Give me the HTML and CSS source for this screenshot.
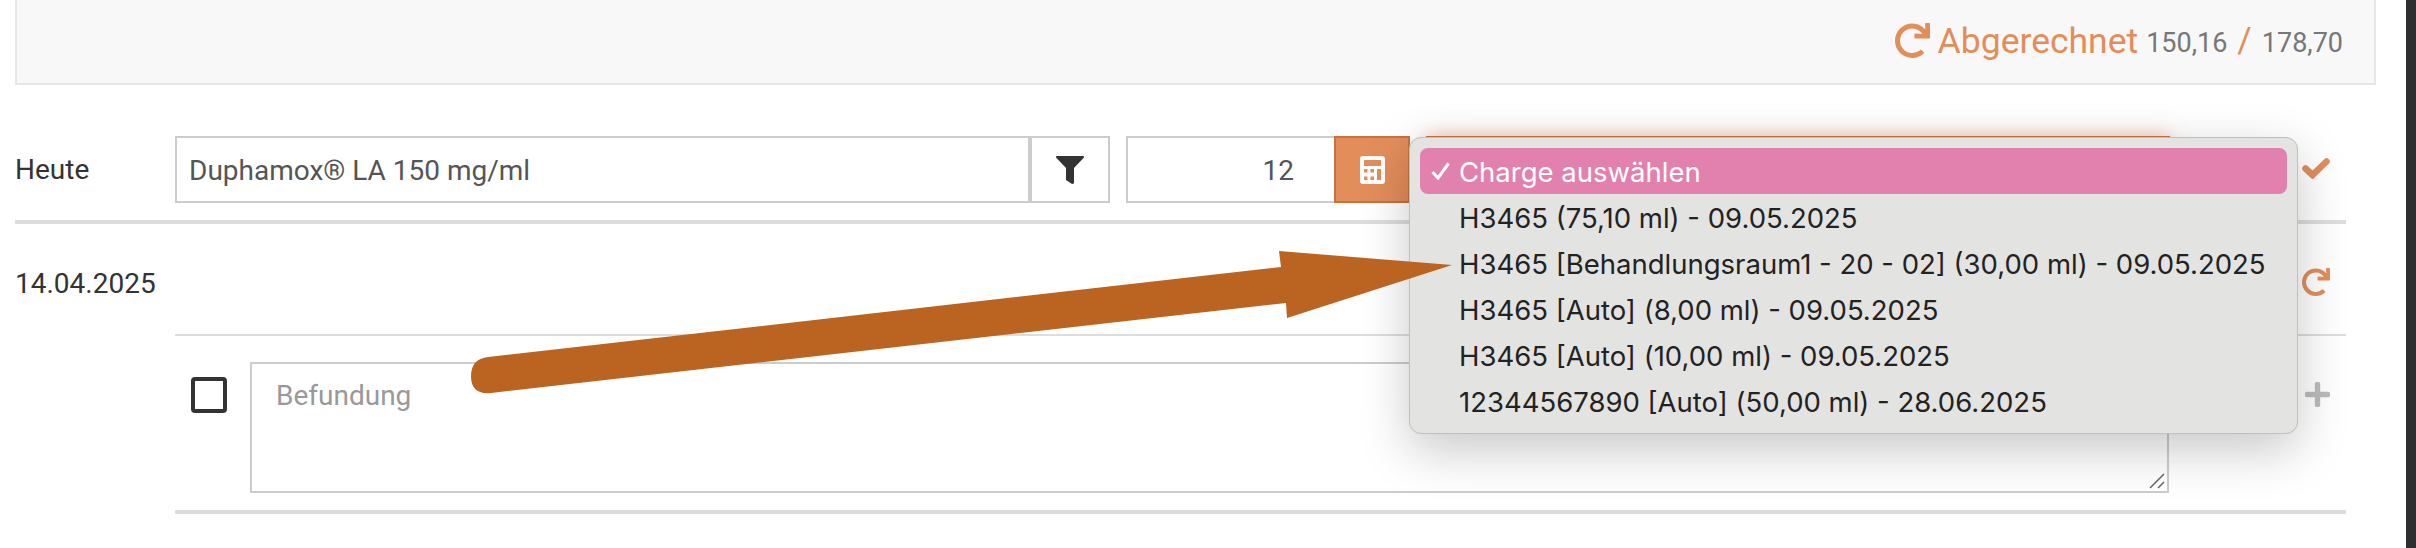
FILE: index.html
```html
<!DOCTYPE html>
<html lang="de">
<head>
<meta charset="utf-8">
<title>Behandlung</title>
<link rel="stylesheet" href="styles.css">
</head>
<body>
<div class="page">
  <main class="main">
    <header class="panel">
      <svg class="icon panel-icon" viewBox="8 0 504 504"><path d="M500.33 0h-47.41a12 12 0 0 0-12 12.57l4 82.76A247.42 247.42 0 0 0 256 8C119.34 8 7.9 119.53 8 256.19 8.1 393.07 119.1 504 256 504a247.1 247.1 0 0 0 166.18-63.91 12 12 0 0 0 .48-17.43l-34-34a12 12 0 0 0-16.38-.55A176 176 0 1 1 402.1 157.8l-101.53-4.87a12 12 0 0 0-12.57 12v47.41a12 12 0 0 0 12 12h200.33a12 12 0 0 0 12-12V12a12 12 0 0 0-12-12z"/></svg>
      <span class="panel-title">Abgerechnet</span>
      <span class="panel-num">150,16</span>
      <span class="panel-slash">/</span>
      <span class="panel-num">178,70</span>
    </header>

    <section class="row row-today">
      <div class="label">Heute</div>
      <div class="group group-product">
        <div class="field field-product">Duphamox® LA 150 mg/ml</div>
        <div class="addon addon-filter">
          <svg class="icon filter-icon" viewBox="0 0 28 28"><path d="M1 0H27Q28.500 0 28 1.500L18 12V26.500Q18 28 16 28L10 24V12L0 1.500Q-.5 0 1 0Z"/></svg>
        </div>
      </div>
      <div class="group group-qty">
        <div class="field field-qty">12</div>
        <div class="addon addon-calc">
          <svg class="calc-icon" viewBox="0 0 25 28"><path fill-rule="evenodd" d="M3 0h19a3 3 0 0 1 3 3v22a3 3 0 0 1-3 3H3a3 3 0 0 1-3-3V3a3 3 0 0 1 3-3zM4 4v6h17V4zM4 13v3.500h3.500V13zM10.500 13v3.500H14V13zM17 13v11h4V13zM4 20.500V24h3.500v-3.500zM10.500 20.500V24H14v-3.500z"/></svg>
        </div>
      </div>
      <div class="select-box"></div>
      <svg class="action action-check" viewBox="0 0 28 21"><path d="M3.500 10.500l7 6.500L24.500 3.500"/></svg>
    </section>

    <section class="row row-history">
      <div class="label">14.04.2025</div>
      <svg class="icon action-redo" viewBox="8 0 504 504"><path d="M500.33 0h-47.41a12 12 0 0 0-12 12.57l4 82.76A247.42 247.42 0 0 0 256 8C119.34 8 7.9 119.53 8 256.19 8.1 393.07 119.1 504 256 504a247.1 247.1 0 0 0 166.18-63.91 12 12 0 0 0 .48-17.43l-34-34a12 12 0 0 0-16.38-.55A176 176 0 1 1 402.1 157.8l-101.53-4.87a12 12 0 0 0-12.57 12v47.41a12 12 0 0 0 12 12h200.33a12 12 0 0 0 12-12V12a12 12 0 0 0-12-12z"/></svg>
    </section>

    <section class="row row-finding">
      <div class="checkbox"></div>
      <div class="textarea">
        Befundung
        <svg class="resizer" viewBox="0 0 16 16"><path d="M1 15L15 1M9 15l6-6"/></svg>
      </div>
      <svg class="icon action-plus" viewBox="0 32 448 448"><path d="M416 208H272V64c0-17.67-14.33-32-32-32h-32c-17.67 0-32 14.33-32 32v144H32c-17.67 0-32 14.33-32 32v32c0 17.67 14.33 32 32 32h144v144c0 17.67 14.33 32 32 32h32c17.67 0 32-14.33 32-32V304h144c17.67 0 32-14.33 32-32v-32c0-17.67-14.33-32-32-32z"/></svg>
    </section>
  </main>
  <div class="edge"></div>
</div>

<div class="menu">
  <div class="menu-item menu-item-active"><svg class="menu-tick" viewBox="0 0 19 18"><path d="M1.500 10l5.500 6L17.500 1.500"/></svg>Charge auswählen</div>
  <div class="menu-item">H3465 (75,10 ml) - 09.05.2025</div>
  <div class="menu-item">H3465 [Behandlungsraum1 - 20 - 02] (30,00 ml) - 09.05.2025</div>
  <div class="menu-item">H3465 [Auto] (8,00 ml) - 09.05.2025</div>
  <div class="menu-item">H3465 [Auto] (10,00 ml) - 09.05.2025</div>
  <div class="menu-item">12344567890 [Auto] (50,00 ml) - 28.06.2025</div>
</div>

<svg class="arrow" viewBox="0 0 2416 548">
  <path d="M488 357L1281 267L1279 251L1452 265L1287 318L1286 303L491 393Q471 395 471 376Q471 359 488 357Z"/>
</svg>
</body>
</html>
```

FILE: styles.css
```css
* {
  box-sizing: border-box;
}

html,
body {
  margin: 0;
  padding: 0;
  background: #fff;
}

body {
  position: relative;
  width: 2416px;
  height: 548px;
  overflow: hidden;
  font-family: Roboto, "Liberation Sans", sans-serif;
  font-size: 28px;
  color: #333;
}

.page {
  display: flex;
  height: 548px;
}

.main {
  flex: 1;
  padding-left: 15px;
  min-width: 0;
}

.edge {
  width: 10px;
  background: #2d2e30;
}

.icon {
  display: block;
  fill: currentColor;
}

/* Header panel */
.panel {
  display: flex;
  align-items: center;
  justify-content: flex-end;
  width: 2361px;
  height: 85px;
  padding: 0 31px 2px 0;
  background: #f8f8f8;
  border: 2px solid #e7e7e7;
  border-top: 0;
}

.panel-icon {
  width: 35px;
  height: 35px;
  margin-right: 8px;
  color: #e38d5b;
}

.panel-title {
  font-size: 35.500px;
  color: #e38d5b;
  margin-right: 8px;
}

.panel-num {
  font-size: 27px;
  color: #777;
  padding-top: 5px;
}

.panel-slash {
  font-size: 35px;
  color: #e38d5b;
  margin: 0 10px;
}

/* Rows */
.row {
  display: flex;
  width: 2331px;
}

.row-today {
  align-items: center;
  margin-top: 51px;
  padding-bottom: 17px;
  border-bottom: 4px solid #ddd;
}

.label {
  width: 160px;
  flex: none;
  color: #333;
}

.group {
  display: flex;
  height: 67px;
}

.group-product {
  width: 935px;
}

.group-qty {
  width: 284px;
  margin-left: 16px;
}

.field {
  flex: 1;
  display: flex;
  align-items: center;
  padding-top: 2px;
  border: 2px solid #ccc;
  color: #555;
}

.field-product {
  padding-left: 12px;
}

.field-qty {
  justify-content: flex-end;
  padding-right: 40px;
  border-right: 0;
}

.addon {
  display: flex;
  align-items: center;
  justify-content: center;
  flex: none;
}

.addon-filter {
  width: 80px;
  border: 2px solid #ccc;
}

.filter-icon {
  width: 28px;
  height: 28px;
  color: #333;
}

.addon-calc {
  width: 76px;
  background: #e38d5b;
  border: 2px solid #c8723f;
}

.calc-icon {
  display: block;
  width: 25px;
  height: 28px;
  fill: #fff;
}

.select-box {
  width: 744px;
  height: 67px;
  margin-left: 16px;
  background: #fff;
  border: 2px solid #c8723f;
  box-shadow: 0 0 18px rgba(227, 141, 91, 0.55);
}

.action {
  flex: none;
  margin-left: auto;
  margin-right: 16px;
}

.action-check {
  width: 28px;
  height: 21px;
  fill: none;
  stroke: #e38d5b;
  stroke-width: 6.500;
  stroke-linecap: round;
  stroke-linejoin: miter;
  margin-top: -2px;
}

.row-history {
  align-items: center;
  justify-content: space-between;
  height: 110px;
  padding-top: 8px;
}

.action-redo {
  width: 28px;
  height: 28px;
  margin-right: 16px;
  margin-top: -2px;
  color: #e38d5b;
}

.row-finding {
  align-items: flex-start;
  position: relative;
  width: 2171px;
  margin-left: 160px;
  padding: 26px 16px 17px 16px;
  border-top: 2px solid #ddd;
  border-bottom: 4px solid #ddd;
}

.checkbox {
  flex: none;
  width: 36px;
  height: 36px;
  margin-top: 15px;
  margin-right: 23px;
  border: 4px solid #333;
  border-radius: 4px;
}

.textarea {
  position: relative;
  width: 1919px;
  height: 131px;
  padding: 15px 24px;
  border: 2px solid #ccc;
  color: #999;
}

.resizer {
  position: absolute;
  right: 2px;
  bottom: 2px;
  width: 16px;
  height: 16px;
  fill: none;
  stroke: #666;
  stroke-width: 1.500;
}

.action-plus {
  width: 25px;
  height: 25px;
  margin-left: 136px;
  margin-top: 20px;
  color: #bbb;
}

/* Native select popup laid over the form */
.menu {
  position: absolute;
  left: 1409px;
  top: 137px;
  width: 889px;
  height: 297px;
  padding: 10px 10px 0;
  background: #e3e3e1;
  border: 1px solid #bfbfbf;
  border-radius: 12px;
  box-shadow: 0 16px 50px rgba(0, 0, 0, 0.22);
  font-family: Inter, "Liberation Sans", sans-serif;
  font-size: 27.500px;
  color: #222;
}

.menu-item {
  position: relative;
  height: 46px;
  line-height: 48px;
  padding-left: 39px;
  white-space: nowrap;
}

.menu-item-active {
  background: #e281ae;
  border-radius: 8px;
  color: #fff;
}

.menu-tick {
  position: absolute;
  left: 11px;
  top: 14px;
  width: 19px;
  height: 18px;
  fill: none;
  stroke: #fff;
  stroke-width: 3;
}

.arrow {
  position: absolute;
  left: 0;
  top: 0;
  width: 2416px;
  height: 548px;
  fill: #bb6320;
  pointer-events: none;
}
```
